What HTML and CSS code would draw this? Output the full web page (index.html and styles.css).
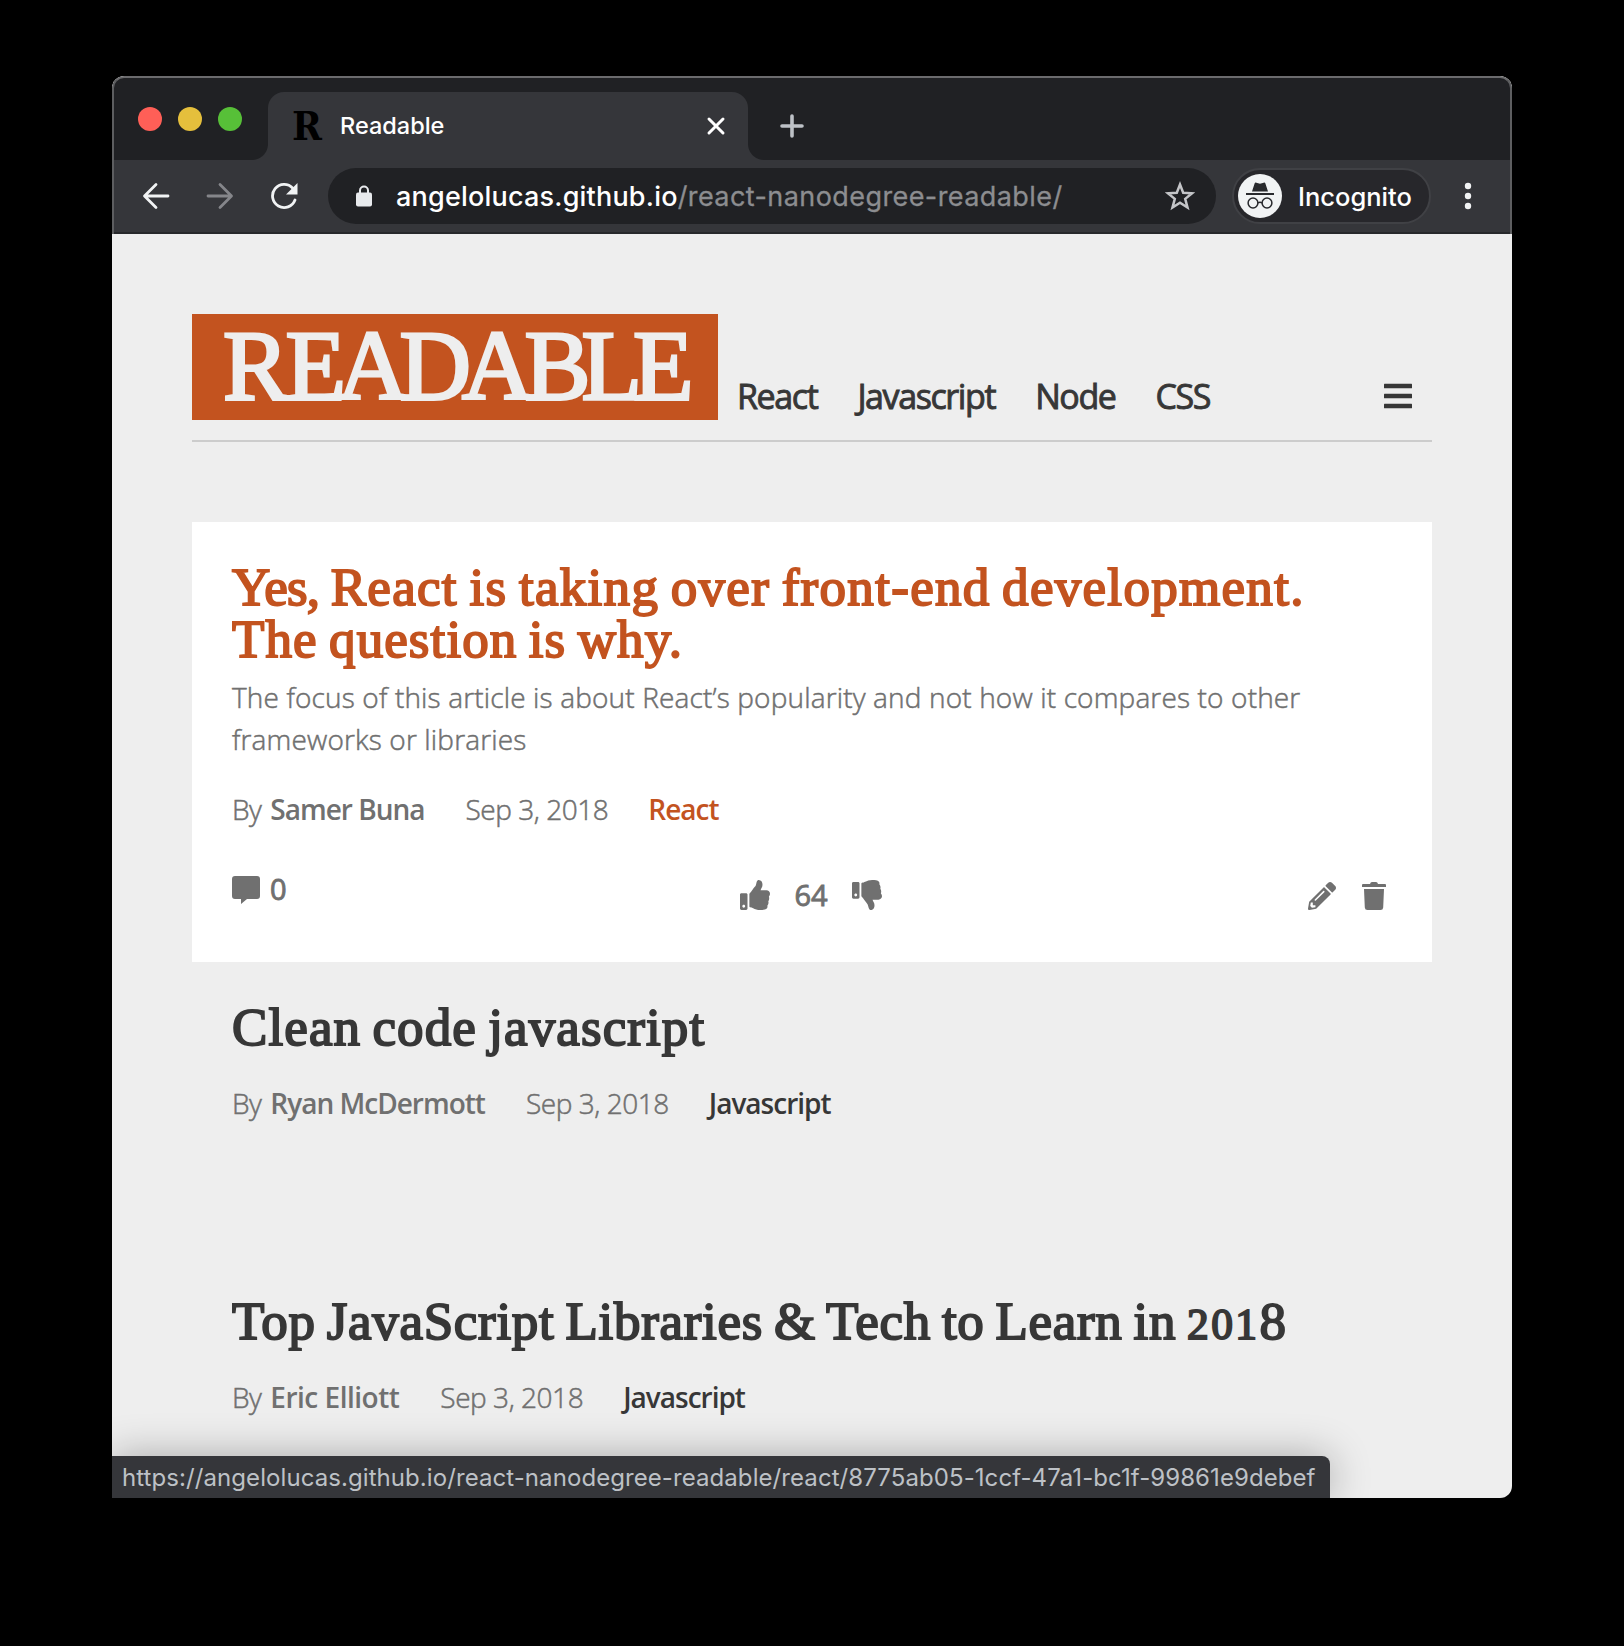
FILE: index.html
```html
<!DOCTYPE html>
<html lang="en">
<head>
<meta charset="utf-8">
<title>Readable</title>
<link rel="stylesheet" href="styles.css">
</head>
<body>
<div class="window">
  <div class="chrome">
    <div class="tabstrip">
      <div class="lights"><i class="light red"></i><i class="light yellow"></i><i class="light green"></i></div>
      <div class="tab">
        <span class="favicon">R</span>
        <span class="tab-title">Readable</span>
        <svg class="close" width="20" height="20" viewBox="0 0 20 20"><path d="M3 3l14 14M17 3L3 17" stroke="#fff" stroke-width="3" stroke-linecap="round"/></svg>
      </div>
      <svg class="plus" width="24" height="24" viewBox="0 0 24 24"><path d="M12 2v20M2 12h20" stroke="#bdc1c6" stroke-width="3.6" stroke-linecap="round"/></svg>
    </div>
    <div class="toolbar">
      <svg class="nav-icon" width="28" height="28" viewBox="0 0 28 28" fill="none" stroke="#f1f3f4" stroke-width="2.8" stroke-linecap="round" stroke-linejoin="round"><path d="M26 14H3M14 2.500L2.500 14 14 25.500"/></svg>
      <svg class="nav-icon" width="28" height="28" viewBox="0 0 28 28" fill="none" stroke="#85868a" stroke-width="2.800" stroke-linecap="round" stroke-linejoin="round"><path d="M2 14h23M14 2.500L25.500 14 14 25.500"/></svg>
      <svg class="nav-icon" width="28" height="28" viewBox="0 0 28 28"><path d="M22.800 6.200A11.600 11.600 0 1 0 25 18" fill="none" stroke="#f1f3f4" stroke-width="2.800" stroke-linecap="round"/><path d="M27.500 1v11.500H16z" fill="#f1f3f4"/></svg>
      <div class="omnibox">
        <svg class="lock" width="16" height="22" viewBox="0 0 16 22"><path d="M4 8V5.500a4 4 0 0 1 8 0V8" fill="none" stroke="#e8eaed" stroke-width="2"/><rect y="7.500" width="16" height="14" rx="2" fill="#e8eaed"/></svg>
        <span class="url">angelolucas.github.io<span class="path">/react-nanodegree-readable/</span></span>
        <svg class="star" width="30" height="30" viewBox="0 0 30 30"><path d="M15 3.500l3.200 8.300 8.900.5-6.900 5.600 2.300 8.600L15 21.700l-7.500 4.800 2.300-8.600-6.900-5.600 8.900-.5z" fill="none" stroke="#c4c5c8" stroke-width="2.500"/></svg>
      </div>
      <div class="chip">
        <svg width="44" height="44" viewBox="0 0 44 44"><circle cx="22" cy="22" r="22" fill="#f1f3f4"/><path d="M14 17.500l2.600-8c.3-.9 1-1.100 1.700-.8l3.700 1 3.700-1c.7-.3 1.400-.1 1.700.8l2.600 8zM8 19h28v2H8z" fill="#28292d"/><g fill="none" stroke="#28292d" stroke-width="1.500"><circle cx="15" cy="29" r="4.900"/><circle cx="29" cy="29" r="4.900"/><path d="M19.900 29q2.100-1.600 4.200 0"/></g></svg>
        <span class="chip-label">Incognito</span>
      </div>
      <svg class="dots" width="8" height="28" viewBox="0 0 8 28" fill="#f1f3f4"><circle cx="4" cy="4" r="3.200"/><circle cx="4" cy="14" r="3.200"/><circle cx="4" cy="24" r="3.200"/></svg>
    </div>
  </div>
  <main class="page">
    <header class="header">
      <h1 class="logo"><span class="initial">R</span>EADABLE</h1>
      <nav class="menu"><a>React</a><a>Javascript</a><a>Node</a><a>CSS</a></nav>
      <svg class="burger" width="28" height="26" viewBox="0 0 28 26" fill="#373737"><rect y=".7" width="28" height="4.600" rx=".5"/><rect y="10.700" width="28" height="4.600" rx=".5"/><rect y="20.700" width="28" height="4.600" rx=".5"/></svg>
    </header>
    <article class="post active">
      <h2 class="title"><span class="tight">Yes,</span><span class="wide"> React is taking over front-end development.</span><br>The question is why.</h2>
      <p class="desc">The focus of this article is about React’s popularity and not how it compares to other<br>frameworks or libraries</p>
      <div class="meta"><span>By <b>Samer Buna</b></span><span>Sep 3, 2018</span><a>React</a></div>
      <div class="actions">
        <div class="comments"><svg width="28" height="28" viewBox="0 0 28 28"><path d="M3 0h22a3 3 0 0 1 3 3v17a3 3 0 0 1-3 3H15l-6 5v-5H3a3 3 0 0 1-3-3V3a3 3 0 0 1 3-3z"/></svg><span>0</span></div>
        <div class="votes">
          <svg width="30" height="30" viewBox="0 0 512 512"><path d="M104 224H24c-13.255 0-24 10.745-24 24v240c0 13.255 10.745 24 24 24h80c13.255 0 24-10.745 24-24V248c0-13.255-10.745-24-24-24zM64 472c-13.255 0-24-10.745-24-24s10.745-24 24-24 24 10.745 24 24-10.745 24-24 24zM384 81.452c0 42.416-25.970 66.208-33.277 94.548h101.723c33.397 0 59.397 27.746 59.553 58.098.084 17.938-7.546 37.249-19.439 49.197l-.11.11c9.836 23.337 8.237 56.037-9.308 79.469 8.681 25.895-.069 57.704-16.382 74.757 4.298 17.598 2.244 32.575-6.148 44.632C440.202 511.587 389.616 512 346.839 512l-2.845-.001c-48.287-.017-87.806-17.598-119.560-31.725-15.957-7.099-36.821-15.887-52.651-16.178-6.540-.12-11.783-5.457-11.783-11.998v-213.770c0-3.200 1.282-6.271 3.558-8.521 39.614-39.144 56.648-80.587 89.117-113.111 14.804-14.832 20.188-37.236 25.393-58.902C282.515 39.293 291.817 0 312 0c24 0 72 8 72 81.452z"/></svg>
          <span>64</span>
          <svg width="30" height="30" viewBox="0 0 512 512"><path d="M0 56v240c0 13.255 10.745 24 24 24h80c13.255 0 24-10.745 24-24V56c0-13.255-10.745-24-24-24H24C10.745 32 0 42.745 0 56zm40 200c0-13.255 10.745-24 24-24s24 10.745 24 24-10.745 24-24 24-24-10.745-24-24zm272 256c-20.183 0-29.485-39.293-33.931-57.795-5.206-21.666-10.589-44.070-25.393-58.902-32.469-32.524-49.503-73.967-89.117-113.111a11.980 11.980 0 0 1-3.558-8.521V59.901c0-6.541 5.243-11.878 11.783-11.998 15.831-.29 36.694-9.079 52.651-16.178C256.189 17.598 295.709.017 343.995 0h2.844c42.777 0 93.363.413 113.774 29.737 8.392 12.057 10.446 27.034 6.148 44.632 16.312 17.053 25.063 48.863 16.382 74.757 17.544 23.432 19.143 56.132 9.308 79.469l.11.11c11.893 11.949 19.523 31.259 19.439 49.197-.156 30.352-26.157 58.098-59.553 58.098H350.723C358.030 364.340 384 388.132 384 430.548 384 504 336 512 312 512z"/></svg>
        </div>
        <div class="manage">
          <svg width="28" height="28" viewBox="0 0 512 512"><path d="M497.900 142.100l-46.100 46.100c-4.700 4.700-12.300 4.700-17 0l-111-111c-4.700-4.700-4.700-12.300 0-17l46.100-46.100c18.700-18.700 49.100-18.700 67.900 0l60.100 60.100c18.800 18.700 18.800 49.100 0 67.900zM284.200 99.800L21.600 362.400.4 483.900c-2.900 16.400 11.400 30.600 27.800 27.800l121.500-21.300 262.600-262.600c4.700-4.700 4.700-12.300 0-17l-111-111c-4.800-4.700-12.400-4.700-17.100 0zM124.100 339.900c-5.500-5.500-5.500-14.300 0-19.800l154-154c5.500-5.500 14.300-5.500 19.800 0s5.500 14.300 0 19.800l-154 154c-5.500 5.500-14.300 5.500-19.800 0zM88 424h48v36.300l-64.500 11.300-31.100-31.100L51.700 376H88v48z"/></svg>
          <svg width="24" height="28" viewBox="0 0 24 28"><path d="M1 2h7q.5-2 2-2h4q1.500 0 2 2h7q1 0 1 1v2H0V3q0-1 1-1zM2 7h20l-.8 18.500q-.2 2.500-2.700 2.500h-13q-2.500 0-2.700-2.500z"/></svg>
        </div>
      </div>
    </article>
    <article class="post">
      <h2 class="title">Clean code javascript</h2>
      <div class="meta"><span>By <b>Ryan McDermott</b></span><span>Sep 3, 2018</span><a>Javascript</a></div>
    </article>
    <article class="post">
      <h2 class="title long">Top JavaScript Libraries &amp; Tech to Learn in <span class="old">201</span>8</h2>
      <div class="meta"><span>By <b class="loose">Eric Elliott</b></span><span>Sep 3, 2018</span><a>Javascript</a></div>
    </article>
    <div class="status">https://angelolucas.github.io/react-nanodegree-readable/react/8775ab05-1ccf-47a1-bc1f-99861e9debef</div>
  </main>
</div>
</body>
</html>
```
FILE: styles.css
```css
* { box-sizing: border-box; }
body { margin: 0; background: #000; height: 1646px; padding: 76px 112px 0; overflow: hidden; }
svg { display: block; flex: none; }
h1, h2, p { margin: 0; font-weight: 400; }

.window { width: 1400px; height: 1422px; border-radius: 12px 12px 12px 0; overflow: hidden; display: flex; flex-direction: column; background: #eee; }

.chrome { flex: none; height: 158px; border: 2px solid #5d5e60; border-width: 2px 2px 0; border-top-color: #6b6b6d; border-radius: 12px 12px 0 0; background: #202124; font-family: Inter, "Liberation Sans", sans-serif; font-weight: 500; color: #fff; overflow: hidden; }
.tabstrip { height: 82px; display: flex; align-items: flex-start; padding-left: 24px; }
.lights { display: flex; gap: 16px; padding-top: 29px; width: 130px; }
.light { width: 24px; height: 24px; border-radius: 50%; }
.red { background: #ff5f57; }
.yellow { background: #e5bf3c; }
.green { background: #57c038; }
.tab { position: relative; margin-top: 14px; width: 480px; height: 68px; border-radius: 16px 16px 0 0; background: #35363a; display: flex; align-items: center; padding: 0 22px 0 24px; }
.tab::before, .tab::after { content: ""; position: absolute; bottom: 0; width: 16px; height: 16px; }
.tab::before { left: -16px; background: radial-gradient(circle at 0 0, #202124 15.500px, #35363a 16.500px); }
.tab::after { right: -16px; background: radial-gradient(circle at 100% 0, #202124 15.500px, #35363a 16.500px); }
.favicon { width: 48px; color: #000; font: bold 40px/68px "DejaVu Serif Condensed", "DejaVu Serif", serif; }
.tab-title { flex: 1; font-size: 23.500px; padding-bottom: 2px; }
.plus { margin: 36px 0 0 32px; }
.toolbar { height: 74px; background: #35363a; border-bottom: 2px solid #27282b; display: flex; align-items: center; padding-left: 28px; }
.nav-icon { margin-right: 36px; }
.omnibox { width: 888px; height: 56px; margin-left: -6px; border-radius: 28px; background: #202124; display: flex; align-items: center; padding: 0 21px 0 28px; }
.url { flex: 1; margin-left: 24px; font-size: 27px; font-weight: 500; letter-spacing: 0.200px; white-space: nowrap; }
.path { color: #8c8d90; font-weight: 400; letter-spacing: 0.420px; -webkit-text-stroke: 0.300px currentColor; }
.chip { width: 199px; height: 56px; margin-left: 16px; border: 2px solid #404145; border-radius: 28px; background: #27272b; display: flex; align-items: center; padding-left: 4px; }
.chip-label { margin-left: 16px; font-size: 25.500px; }
.dots { margin-left: 33px; }

.page { flex: 1; min-height: 0; position: relative; padding: 80px 80px 0; font-family: "Open Sans", "Noto Sans", sans-serif; color: #707070; }
.header { height: 128px; border-bottom: 2px solid #ccc; display: flex; align-items: flex-start; margin-bottom: 80px; }
.logo { width: 526px; height: 106px; background: #c3531f; color: #eee; padding-left: 31px; font: 99px/103px "Liberation Serif", serif; letter-spacing: -9px; -webkit-text-stroke: 3px #eee; white-space: nowrap; }
.initial { letter-spacing: -3.500px; }
.menu { flex: 1; display: flex; gap: 40px; padding-left: 19px; margin-top: 59px; font-size: 34px; line-height: 46px; letter-spacing: -1.400px; color: #373737; -webkit-text-stroke: 0.900px currentColor; }
.burger { margin: 69px 20px 0 0; }

.post { height: 294px; padding: 40px; }
.active { height: 440px; background: #fff; }
.title { font: 53px/52px "Liberation Serif", serif; color: #373737; letter-spacing: 1.100px; word-spacing: -3px; margin-top: -1px; padding-bottom: 1px; -webkit-text-stroke: 1.900px currentColor; white-space: nowrap; }
.tight { letter-spacing: -0.800px; }
.wide { letter-spacing: 1.300px; }
.long { letter-spacing: 0.700px; }
.active .title, .active .meta a { color: #c3531f; }
.old { font-size: 0.820em; line-height: 1; letter-spacing: 2.400px; }
.desc { margin-top: 10px; font-size: 28px; line-height: 42px; font-weight: 300; letter-spacing: 0.150px; -webkit-text-stroke: 0.500px currentColor; white-space: nowrap; }
.meta { margin-top: 28px; display: flex; gap: 41px; font-size: 28px; line-height: 42px; font-weight: 300; letter-spacing: -0.450px; -webkit-text-stroke: 0.500px currentColor; white-space: nowrap; }
.meta b, .meta a { font-weight: 600; letter-spacing: -1px; -webkit-text-stroke: 0; }
.meta b { margin-left: 2px; }
.meta b.loose { letter-spacing: -0.500px; }
.meta a { color: #373737; margin-left: -1px; }
.actions { margin-top: 46px; display: grid; grid-template-columns: 1fr auto 1fr; font-size: 29px; line-height: 30px; -webkit-text-stroke: 0.900px currentColor; }
.actions svg { fill: #707070; stroke: none; }
.comments, .votes, .manage { display: flex; }
.comments { gap: 10px; }
.comments span { margin-top: -2px; }
.votes { gap: 24px; padding: 4px 2px 0 0; }
.manage { gap: 26px; justify-content: flex-end; padding: 6px 6px 0 0; }

.status { position: absolute; left: 0; bottom: 0; width: 1218px; height: 42px; border-radius: 0 8px 0 0; background: #35363a; color: #bdc1c6; box-shadow: 0 0 40px rgba(0, 0, 0, 0.300); padding-left: 10px; font: 400 24px/43px Inter, sans-serif; letter-spacing: 0.075px; white-space: nowrap; }
```
